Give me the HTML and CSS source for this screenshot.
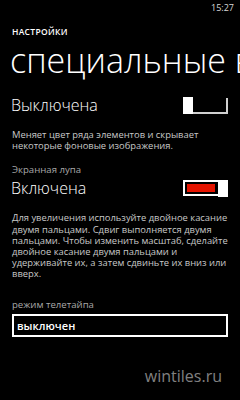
FILE: index.html
```html
<!DOCTYPE html>
<html lang="ru">
<head>
    <meta charset="UTF-8">
    <meta name="viewport" content="width=device-width, initial-scale=1.0">
    <title>Специальные возможности</title>
    <link rel="stylesheet" href="styles.css">
</head>
<body>

    <!-- Status bar -->
    <div class="status-bar">
        <span class="clock">15:27</span>
    </div>

    <!-- Page header -->
    <div class="header">
        <div class="app-title">НАСТРОЙКИ</div>
        <div class="page-title">специальные возможности</div>
    </div>

    <!-- High contrast -->
    <div class="setting">
        <div class="toggle-row">
            <span class="toggle-label">Выключена</span>
            <div class="toggle toggle-off">
                <div class="thumb"></div>
                <div class="track"></div>
            </div>
        </div>
        <p class="hint">Меняет цвет ряда элементов и скрывает некоторые фоновые изображения.</p>
    </div>

    <!-- Screen magnifier -->
    <div class="setting">
        <div class="caption">Экранная лупа</div>
        <div class="toggle-row">
            <span class="toggle-label">Включена</span>
            <div class="toggle toggle-on">
                <div class="track"><div class="fill"></div></div>
                <div class="thumb"></div>
            </div>
        </div>
        <p class="hint">Для увеличения используйте двойное касание двумя пальцами. Сдвиг выполняется двумя пальцами. Чтобы изменить масштаб, сделайте двойное касание двумя пальцами и удерживайте их, а затем сдвиньте их вниз или вверх.</p>
    </div>

    <!-- TTY mode -->
    <div class="setting tty">
        <div class="caption">режим телетайпа</div>
        <div class="picker">выключен</div>
    </div>

    <div class="watermark">wintiles.ru</div>

</body>
</html>
```

FILE: styles.css
```css
body {
    font-family: 'Open Sans', sans-serif;
    margin: 0;
    padding: 0 12px;
    background-color: #000;
    color: #fff;
    width: 216px;
    height: 400px;
    overflow: hidden;
    position: relative;
}

.status-bar {
    display: flex;
    justify-content: flex-end;
    height: 16px;
    margin-right: -6px;
}

.clock {
    font-size: 9px;
    color: #d8d8d8;
    line-height: 16px;
}

.header {
    margin-top: 10px;
}

.app-title {
    font-size: 8.5px;
    font-weight: 600;
    letter-spacing: 0.3px;
    line-height: 12px;
}

.page-title {
    font-size: 34px;
    font-weight: 300;
    line-height: 44px;
    white-space: nowrap;
    margin-left: -2px;
    width: 230px;
    overflow: hidden;
}

.setting {
    margin-top: 12px;
}

.toggle-row {
    display: flex;
    justify-content: space-between;
    align-items: center;
    height: 22px;
}

.toggle-label {
    font-size: 16px;
    font-weight: 300;
    line-height: 22px;
    margin-left: -1px;
}

.toggle {
    display: flex;
    align-items: center;
    width: 45px;
    height: 20px;
}

.thumb {
    width: 10px;
    height: 17px;
    background-color: #fff;
}

.toggle-off .track {
    flex: 1;
    height: 14px;
    border-right: 2px solid #d0d0d0;
    border-bottom: 2px solid #d0d0d0;
    margin-top: 1px;
}

.toggle-on .track {
    flex: 1;
    height: 16px;
    border: 2px solid #fff;
    border-right: none;
    padding: 2px 3px 2px 2px;
    box-sizing: border-box;
    display: flex;
}

.fill {
    flex: 1;
    background-color: #e51400;
}

.hint {
    font-size: 9.4px;
    line-height: 11.2px;
    color: #c8c8c8;
    margin: 13px 0 0;
}

.caption {
    font-size: 9.6px;
    color: #a8a8a8;
    line-height: 12px;
}

.setting + .setting {
    margin-top: 13px;
}

.setting + .setting .toggle-row {
    margin-top: 1px;
}

.setting.tty {
    margin-top: 19px;
}

.picker {
    margin-top: 3px;
    border: 2px solid #fff;
    height: 19px;
    padding: 0 3px;
    font-size: 11px;
    font-weight: 600;
    line-height: 19px;
}

.watermark {
    position: absolute;
    right: 18px;
    bottom: 13px;
    font-size: 16px;
    color: #808080;
}
```
